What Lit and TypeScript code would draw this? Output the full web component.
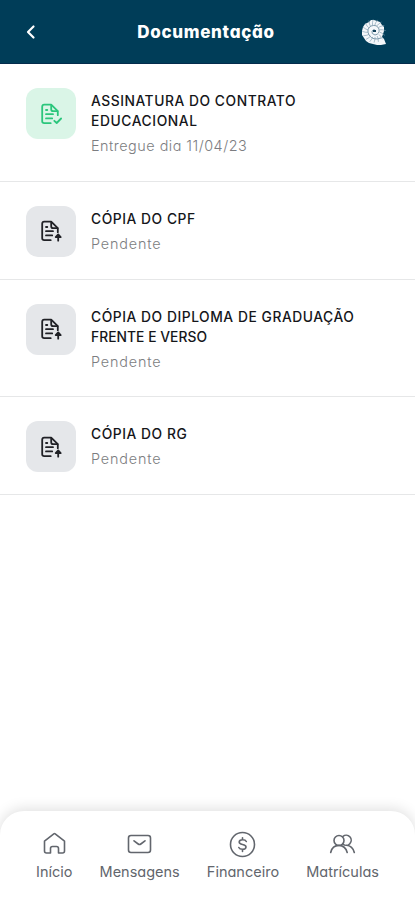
import { LitElement, html, css, svg } from "lit";
import { customElement, property } from "lit/decorators.js";
import { classMap } from "lit/directives/class-map.js";

interface Doc {
  lines: string[];
  status: string;
  done?: boolean;
}

const docs: Doc[] = [
  { lines: ["ASSINATURA DO CONTRATO", "EDUCACIONAL"], status: "Entregue dia 11/04/23", done: true },
  { lines: ["CÓPIA DO CPF"], status: "Pendente" },
  { lines: ["CÓPIA DO DIPLOMA DE GRADUAÇÃO", "FRENTE E VERSO"], status: "Pendente" },
  { lines: ["CÓPIA DO RG"], status: "Pendente" },
];

@customElement("document-row")
class DocumentRow extends LitElement {
  @property({ attribute: false }) doc!: Doc;

  static styles = css`
    :host { display: block; border-bottom: 1px solid #e6e7e8; }
    .row { display: flex; gap: 15px; padding: 24px 24px 22px 25.5px; }
    .tile {
      flex: none; width: 50.5px; height: 51px; border-radius: 12px;
      display: grid; place-items: center; background: #e5e7ea; color: #202126;
    }
    .tile.done { background: #daf5e7; color: #2bc67c; }
    .icon { width: 24px; height: 24px; display: block; fill: none; stroke: currentColor;
      stroke-width: 1.8; stroke-linecap: round; stroke-linejoin: round; }
    .text { padding-top: 3px; min-width: 0; }
    .title { font-size: 13.8px; line-height: 20px; font-weight: 500; color: #15161a; white-space: nowrap; letter-spacing: 0.55px; }
    .title + .title { letter-spacing: 0.05px; }
    .status { margin: 5px 0 2.5px; font-size: 14.4px; line-height: 20px; font-weight: 300; color: #7c7d81; letter-spacing: 0.85px; }
    .done + .text .title + .title { letter-spacing: 0.6px; }
    .done + .text .status { letter-spacing: 0.5px; }
  `;

  render() {
    const { lines, status, done } = this.doc;
    return html`<div class="row">
      <div class=${classMap({ tile: true, done: !!done })}>
        <svg class="icon" viewBox="0 0 24 24">
          <path d="M11.7 21.2H5.2Q3.2 21.2 3.2 19.2V4.7Q3.2 2.7 5.2 2.7H12.2L18.8 9.2V13.2" />
          <path d="M12.2 3V7.2Q12.2 9.2 14.2 9.2H18.5M7 8H8.3M7 12.2H14M7 16.4H13.2" />
          ${done
            ? svg`<path d="M15.3 18.8L17.7 21L22.1 16.5" />`
            : svg`<path d="M19.2 21.7V16M16.7 18L19.2 15.4L21.7 18Z" fill="currentColor" />`}
        </svg>
      </div>
      <div class="text">
        ${lines.map((l) => html`<div class="title">${l}</div>`)}
        <div class="status">${status}</div>
      </div>
    </div>`;
  }
}

const homeIcon = svg`<path d="M9.5 22H5.5Q3.5 22 3.5 20V10.2L12.8 2.8Q13.5 2.3 14.2 2.8L23.5 10.2V20Q23.5 22 21.5 22H17.5V17.5Q17.5 15.5 15.5 15.5H11.5Q9.5 15.5 9.5 17.5Z" />`;
const mailIcon = svg`<rect x="2.5" y="4.5" width="22" height="17" rx="2.5" /><path d="M8 9.8L12.2 13Q13.5 14 14.8 13L19 9.8" />`;
const moneyIcon = svg`<circle cx="13.5" cy="13.5" r="12" /><path d="M17.3 10.5Q16.5 8.8 13.7 8.8Q10.2 8.8 10.2 11.1Q10.2 12.9 13.5 13.5Q17 14.1 17 16Q17 18.3 13.5 18.3Q10.6 18.3 9.8 16.5M13.5 6.7V8.8M13.5 18.3V20.5" />`;
const peopleIcon = svg`<circle cx="10" cy="9.5" r="5" /><path d="M14 5.4A5 5 0 1 1 14 13.1M1.7 21.5Q3.3 14.4 10 14.4Q16.2 14.4 18.2 21.5M17.5 14.3Q23.6 14.8 25.3 21.5" />`;

const tabs = [
  { label: "Início", icon: homeIcon },
  { label: "Mensagens", icon: mailIcon },
  { label: "Financeiro", icon: moneyIcon },
  { label: "Matrículas", icon: peopleIcon },
];

const ribs = [-12, 12, 35, 58, 80, 102, 124, 146, 168, 190, 212, 234, 256, 278, 300, 322];

@customElement("app-root")
class AppRoot extends LitElement {
  static styles = css`
    :host {
      display: flex; flex-direction: column; height: 900px; overflow: hidden; background: #fff;
      font-family: Inter, "Liberation Sans", sans-serif; font-feature-settings: "cv11";
    }
    .bar {
      flex: none; box-sizing: border-box; height: 64px; background: #003d58; border-bottom: 1px solid #042c4c;
      display: grid; grid-template-columns: 60px 1fr 60px; align-items: center; color: #fff;
    }
    .back { width: 12px; height: 18px; margin: 1px 0 0 25px; fill: none; stroke: #fff; stroke-width: 2.2; stroke-linecap: round; stroke-linejoin: round; }
    .heading { margin: 0 0 0 -3px; text-align: center; font-size: 17px; font-weight: 800; line-height: 24px; letter-spacing: 0.7px; }
    .shell { width: 26px; height: 28px; margin: 2px 0 0 6px; }
    .list { flex: 1; }
    .nav {
      flex: none; box-sizing: border-box; height: 89px; padding: 20px 36px 0; background: #fff;
      border-radius: 24px 24px 0 0; box-shadow: 0 -2px 14px rgba(0, 0, 0, 0.13);
      display: flex; justify-content: space-between;
    }
    .tab { display: flex; flex-direction: column; align-items: center; color: #62666d; }
    .glyph { width: 27px; height: 27px; fill: none; stroke: currentColor; stroke-width: 1.6; stroke-linecap: round; stroke-linejoin: round; }
    .label { margin-top: 4px; font-size: 14.5px; line-height: 20px; white-space: nowrap; }
  `;

  render() {
    return html`
      <header class="bar">
        <svg class="back" viewBox="0 0 12 18"><path d="M8.5 3.5L3 9L8.5 14.5" /></svg>
        <h1 class="heading">Documentação</h1>
        <svg class="shell" viewBox="0 0 26 28">
          <path fill="#f4f7fa" d="M13 1L16 2L19 3L21 6L23 8V12L22 15L21 18L23 20L25 25L20 26L16 26L12 25L8 24L5 22L3 19L1 16V12L2 8L4 5L8 3L10 1Z" />
          ${ribs.map((a) => svg`<path transform="rotate(${a} 13 12)" d="M19 12Q21 12 24.5 14" fill="none" stroke="#7f9db0" stroke-width=".6" />`)}
          <path d="M20 19Q12 22 8 16Q5 10 10 7Q16 5 18 10Q19 15 14 16Q10 15 11 12Q13 9 15 12" fill="none" stroke="#7f9bac" stroke-width="1" />
          <path d="M12 11H15V13H12Z" fill="#123f58" />
        </svg>
      </header>
      <main class="list">${docs.map((d) => html`<document-row .doc=${d}></document-row>`)}</main>
      <nav class="nav">
        ${tabs.map((t) => html`<div class="tab">
          <svg class="glyph" viewBox="0 0 27 27">${t.icon}</svg>
          <span class="label">${t.label}</span>
        </div>`)}
      </nav>
    `;
  }
}
